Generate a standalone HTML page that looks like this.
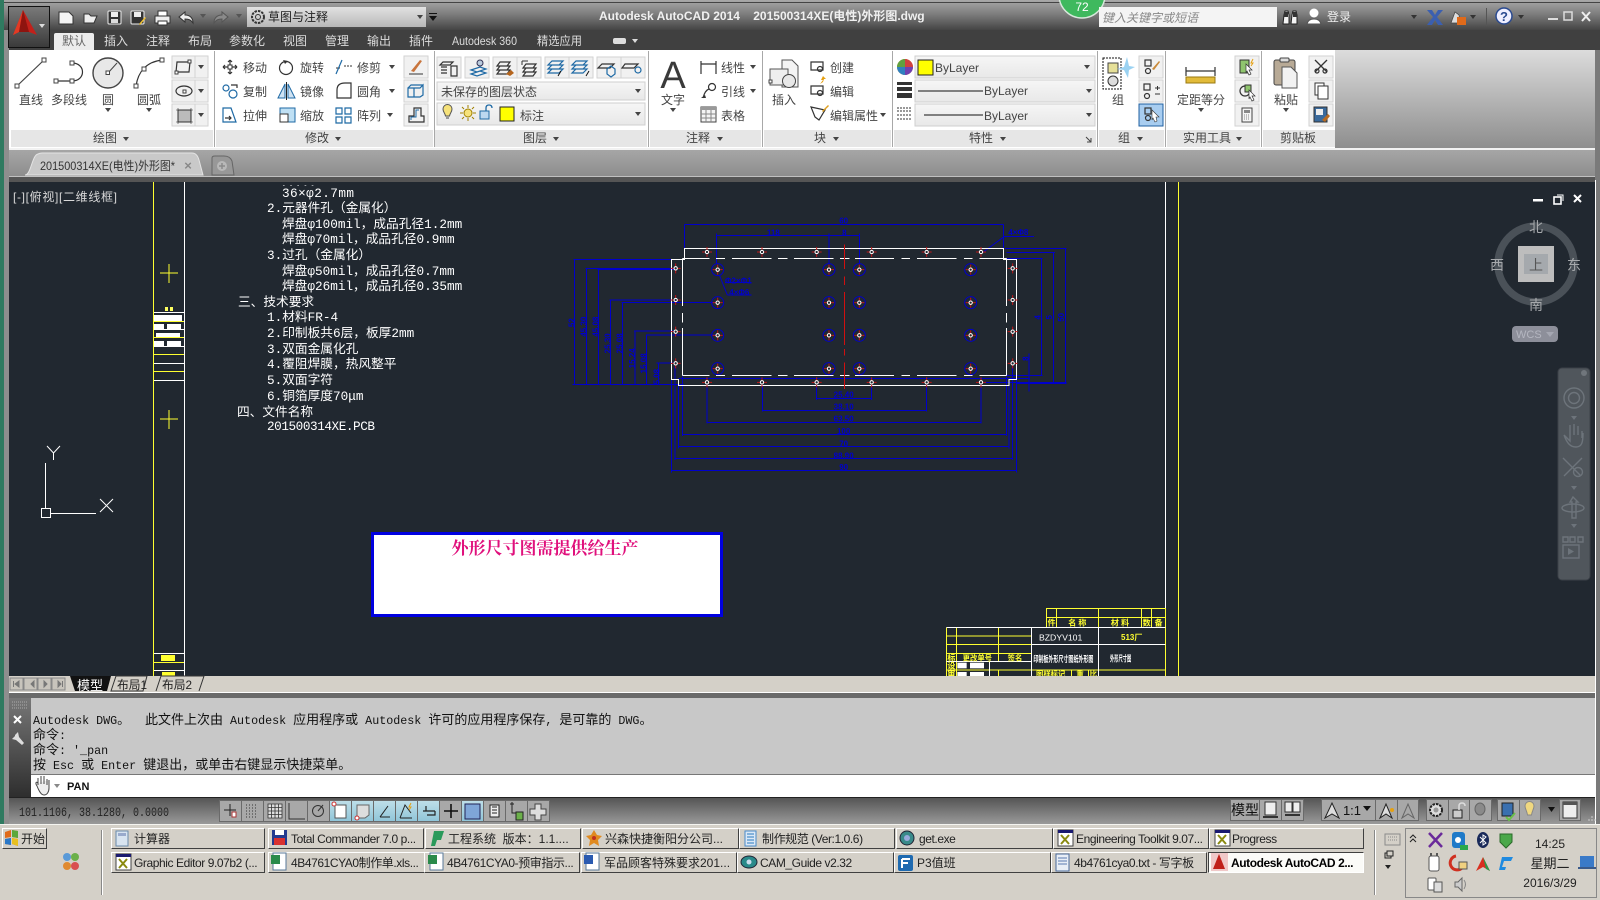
<!DOCTYPE html>
<html lang="zh"><head><meta charset="utf-8"><title>Autodesk AutoCAD 2014</title>
<style>
html,body{margin:0;padding:0;width:1600px;height:900px;overflow:hidden;background:#d4d0c8}
svg{position:absolute;left:0;top:0}
text{font-family:"Liberation Sans","WenQuanYi Zen Hei","Noto Sans CJK SC",sans-serif;font-size:12px;fill:#444}
.m{text-anchor:middle}
.tab{fill:#ddd;font-size:12px}
.d{font-family:"Liberation Mono","WenQuanYi Zen Hei",monospace;font-size:12.7px;fill:#fff}
.c{font-family:"Liberation Mono","WenQuanYi Zen Hei",monospace;font-size:11.7px;fill:#111}
.c tspan{font-size:13px}
.bt{fill:#f1f1f1;stroke:#d2d2d2}
.cb{fill:url(#gc);stroke:#cfcfcf}
.i{fill:none;stroke:#333;stroke-width:1.2}
.ib{fill:none;stroke:#1f6aa5;stroke-width:1.2}
.g{fill:#fff;stroke:#444;stroke-width:1}
.ar{fill:#444}
.dim{stroke:#0000cc;stroke-width:3;fill:none;shape-rendering:crispEdges}
.dt{font-family:"Liberation Sans",sans-serif;font-size:24px;fill:#0000cc;font-weight:bold;text-anchor:middle}
.st{fill:#a8a8a8;stroke:#6a6a6a}
.sa{fill:url(#gb);stroke:#6a6a6a}
.nv{fill:none;stroke:#6d747b;stroke-width:1.4}
.b{position:absolute;height:19px;box-sizing:content-box;border:1px solid;border-color:#fff #404040 #404040 #fff;background:#d4d0c8;font:12px/21px "Liberation Sans","WenQuanYi Zen Hei",sans-serif;color:#222;padding-left:22px;white-space:nowrap;overflow:hidden}
.n{letter-spacing:-.42px}
</style></head><body>
<svg width="1600" height="900" viewBox="0 0 1600 900">
<defs>
<linearGradient id="gt" x1="0" y1="0" x2="0" y2="1"><stop offset="0" stop-color="#a8a8a8"/><stop offset=".5" stop-color="#7a7a7a"/><stop offset="1" stop-color="#444"/></linearGradient>
<linearGradient id="gw" x1="0" y1="0" x2="0" y2="1"><stop offset="0" stop-color="#e2e2e2"/><stop offset="1" stop-color="#b8b8b8"/></linearGradient>
<linearGradient id="gc" x1="0" y1="0" x2="0" y2="1"><stop offset="0" stop-color="#f6f6f6"/><stop offset="1" stop-color="#e8e8e8"/></linearGradient>
<linearGradient id="gr" x1="0" y1="0" x2="0" y2="1"><stop offset="0" stop-color="#dcdcdc"/><stop offset="1" stop-color="#8e8e8e"/></linearGradient>
<linearGradient id="gs" x1="0" y1="0" x2="0" y2="1"><stop offset="0" stop-color="#555"/><stop offset="1" stop-color="#9a9a9a"/></linearGradient>
<linearGradient id="gb" x1="0" y1="0" x2="0" y2="1"><stop offset="0" stop-color="#bfdfe9"/><stop offset="1" stop-color="#8fc5d8"/></linearGradient>
<linearGradient id="gl" x1="0" y1="0" x2="0" y2="1"><stop offset="0" stop-color="#777"/><stop offset="1" stop-color="#2e2e2e"/></linearGradient>
<linearGradient id="gtab" x1="0" y1="0" x2="0" y2="1"><stop offset="0" stop-color="#a6a6a6"/><stop offset="1" stop-color="#8c8c8c"/></linearGradient>
<linearGradient id="glg" x1="0" y1="0" x2="0" y2="1"><stop offset="0" stop-color="#7a7a7a"/><stop offset="1" stop-color="#3a3a3a"/></linearGradient>
<g id="h"><path d="M-15 0H15M0-15V15" stroke="#c01818" stroke-width="3"/><circle r="5" fill="#212830" stroke="#fff" stroke-width="3"/></g>
<g id="H"><circle r="18" fill="none" stroke="#0000cc" stroke-width="3"/><use href="#h"/></g>
<path id="dn" d="M-3-2H3L0 2z"/>
</defs>

<!-- base -->
<rect width="1600" height="900" fill="#808080"/>
<rect x="0" y="0" width="4" height="824" fill="#2f7a60"/>
<rect x="4" y="0" width="5" height="824" fill="#8e8e8e"/>
<rect x="1595" y="0" width="5" height="824" fill="#7a7a7a"/>
<rect x="1595" y="180" width="1" height="644" fill="#fff"/>

<!-- title bar -->
<rect x="4" y="0" width="1596" height="30" fill="url(#gt)"/>
<rect x="4" y="2" width="1596" height="1" fill="#444"/>
<!-- tabs row -->
<rect x="9" y="30" width="1591" height="20" fill="#404040"/>
<path d="M54 50V35q0-2 2-2H92q2 0 2 2V50z" fill="#ececec"/>
<text x="74" y="45" class="m" style="fill:#666">默认</text>
<text x="116" y="45" class="m tab">插入</text><text x="158" y="45" class="m tab">注释</text><text x="200" y="45" class="m tab">布局</text><text x="247" y="45" class="m tab">参数化</text><text x="295" y="45" class="m tab">视图</text><text x="337" y="45" class="m tab">管理</text><text x="379" y="45" class="m tab">输出</text><text x="421" y="45" class="m tab">插件</text><text x="452" y="45" class="tab" textLength="65" lengthAdjust="spacingAndGlyphs">Autodesk 360</text><text x="537" y="45" class="tab" textLength="45" lengthAdjust="spacingAndGlyphs">精选应用</text>
<rect x="613" y="38" width="13" height="6" rx="2" fill="#ddd"/><use href="#dn" x="635" y="41" fill="#ddd"/>
<!-- logo -->
<rect x="8.500" y="6.500" width="41" height="41" fill="url(#glg)" stroke="#111"/>
<path d="M23 10L13 35L19 32H29L37 35z" fill="#c2201a"/>
<path d="M23 10L19 32L13 35z" fill="#e23a24"/><path d="M23 10L29 32H19z" fill="#8e140f"/>
<use href="#dn" x="42" y="26" fill="#ddd"/>
<!-- QAT -->
<path d="M59 12h10l4 4v8H59z" fill="#f4f4f4" stroke="#333"/>
<path d="M84 22V14h5l2 2h6l-3 7H84z" fill="#eee" stroke="#333"/>
<rect x="108" y="11" width="13" height="13" rx="1" fill="#333" stroke="#eee"/><rect x="111" y="12" width="7" height="5" fill="#eee"/><rect x="111" y="19" width="7" height="4" fill="#ddd"/>
<rect x="131" y="11" width="13" height="13" rx="1" fill="#333" stroke="#eee"/><rect x="134" y="12" width="7" height="5" fill="#eee"/><path d="M139 24l6-7 1 1-6 7z" fill="#f2c230"/>
<rect x="155" y="16" width="15" height="7" fill="#eee" stroke="#333"/><rect x="158" y="11" width="9" height="5" fill="#fff" stroke="#333"/><rect x="158" y="21" width="9" height="4" fill="#fff" stroke="#333"/>
<path d="M179 17l6-5v3c5 0 8 3 8 8-2-3-4-4-8-4v3z" fill="#eee" stroke="#333"/>
<use href="#dn" x="203" y="16" fill="#555"/>
<path d="M228 17l-6-5v3c-5 0-8 3-8 8 2-3 4-4 8-4v3z" fill="#8a8a8a" stroke="#555"/>
<use href="#dn" x="239" y="16" fill="#555"/>
<rect x="247" y="7" width="179" height="20" fill="url(#gw)"/>
<circle cx="258" cy="17" r="6" fill="none" stroke="#333" stroke-width="2" stroke-dasharray="2.5 1"/><circle cx="258" cy="17" r="2.5" fill="none" stroke="#333"/>
<text x="268" y="21" style="fill:#222">草图与注释</text>
<use href="#dn" x="420" y="17" fill="#444" /><path d="M429 13h8v1h-8zM429 16h8l-4 5z" fill="#111"/>
<text x="599" y="20" style="fill:#f0f0f0;font-weight:bold" xml:space="preserve">Autodesk AutoCAD 2014    201500314XE(电性)外形图.dwg</text>
<circle cx="1082" cy="-5" r="23" fill="#3fb95e" stroke="#d8e8dc" stroke-width="1.5"/>
<text x="1082" y="11" class="m" style="fill:#fff;font-size:12px">72</text>
<rect x="1099" y="7" width="178" height="20" fill="#f4f4f4"/>
<text x="1102" y="22" style="fill:#888;font-style:italic">键入关键字或短语</text>
<path d="M1284 15l1-4h3l1 4v9h-6zM1292 15l1-4h3l1 4v9h-6z" fill="#f4f4f4" stroke="#222"/><rect x="1284" y="12" width="4" height="5" fill="#333"/><rect x="1293" y="12" width="4" height="5" fill="#333"/>
<circle cx="1314" cy="13" r="4.5" fill="#fff"/><path d="M1307 24c1-4 4-5 7-5s6 1 7 5z" fill="#fff" stroke="#555"/>
<text x="1327" y="21" style="fill:#eee">登录</text>
<use href="#dn" x="1414" y="17" fill="#333"/>
<path d="M1427 10h5l3 5 3-5h5l-6 7 6 8h-5l-3-5-3 5h-5l6-8z" fill="#3b5fb0"/>
<path d="M1451 23l4-11 4 3 1 8z" fill="#ddd" stroke="#444" stroke-width=".7"/><rect x="1457" y="17" width="9" height="8" fill="#e06a1a"/>
<use href="#dn" x="1473" y="17" fill="#333"/>
<rect x="1486" y="8" width="1" height="18" fill="#555"/>
<circle cx="1504" cy="16" r="8" fill="#eef" stroke="#2a4a90" stroke-width="1.5"/><text x="1504" y="21" class="m" style="fill:#2a4a90;font-weight:bold;font-size:13px">?</text>
<use href="#dn" x="1521" y="17" fill="#333"/>
<rect x="1548" y="18" width="10" height="2" fill="#ddd"/><rect x="1564" y="12" width="8" height="8" fill="none" stroke="#ddd" stroke-width="1.5"/>
<path d="M1582 12l8 9M1590 12l-8 9" stroke="#eee" stroke-width="2"/>

<!-- ribbon -->
<rect x="9" y="50" width="1326" height="98" fill="#fff"/>
<rect x="1335" y="50" width="260" height="98" fill="url(#gr)"/>
<rect x="9" y="148" width="1586" height="2" fill="#f2f2f2"/>
<g fill="#e6e6e6">
<rect x="11" y="130" width="202" height="17"/><rect x="216" y="130" width="217" height="17"/><rect x="435" y="130" width="212" height="17"/><rect x="650" y="130" width="111" height="17"/><rect x="764" y="130" width="127" height="17"/><rect x="894" y="130" width="202" height="17"/><rect x="1099" y="130" width="65" height="17"/><rect x="1167" y="130" width="93" height="17"/><rect x="1263" y="130" width="72" height="17"/>
</g>
<g fill="#a8a8a8">
<rect x="214" y="51" width="1" height="96"/><rect x="434" y="51" width="1" height="96"/><rect x="648" y="51" width="1" height="96"/><rect x="762" y="51" width="1" height="96"/><rect x="892" y="51" width="1" height="96"/><rect x="1097" y="51" width="1" height="96"/><rect x="1165" y="51" width="1" height="96"/><rect x="1261" y="51" width="1" height="96"/>
</g>
<!-- footers -->
<text x="105" y="142" class="m">绘图</text><use href="#dn" x="126" y="139" class="ar"/>
<text x="317" y="142" class="m">修改</text><use href="#dn" x="338" y="139" class="ar"/>
<text x="535" y="142" class="m">图层</text><use href="#dn" x="556" y="139" class="ar"/>
<text x="698" y="142" class="m">注释</text><use href="#dn" x="720" y="139" class="ar"/>
<text x="820" y="142" class="m">块</text><use href="#dn" x="836" y="139" class="ar"/>
<text x="981" y="142" class="m">特性</text><use href="#dn" x="1003" y="139" class="ar"/>
<path d="M1086 137l5 5M1091 138v4h-4" stroke="#444" fill="none"/>
<text x="1124" y="142" class="m">组</text><use href="#dn" x="1140" y="139" class="ar"/>
<text x="1207" y="142" class="m">实用工具</text><use href="#dn" x="1239" y="139" class="ar"/>
<text x="1298" y="142" class="m">剪贴板</text>

<!-- draw panel -->
<path d="M17 86L44 60" stroke="#444" stroke-width="1.2"/><rect x="15" y="84" width="4" height="4" class="g"/><rect x="42" y="58" width="4" height="4" class="g"/>
<path d="M56 81H72C86 81 86 63 72 63" class="i"/><rect x="54" y="79" width="4" height="4" class="g"/><rect x="70" y="79" width="4" height="4" class="g"/><rect x="70" y="61" width="4" height="4" class="g"/>
<circle cx="108" cy="73" r="15" fill="#e8e8e8" stroke="#444" stroke-width="1.4"/><path d="M108 73L117 63" stroke="#444"/><rect x="106" y="71" width="3.5" height="3.5" class="g"/>
<path d="M136 86C138 72 146 62 162 60" class="i"/><rect x="134" y="84" width="4" height="4" class="g"/><rect x="142" y="67" width="4" height="4" class="g"/><rect x="160" y="58" width="4" height="4" class="g"/>
<text x="31" y="104" class="m">直线</text><text x="69" y="104" class="m">多段线</text><text x="108" y="104" class="m">圆</text><text x="149" y="104" class="m">圆弧</text>
<use href="#dn" x="108" y="110" class="ar"/><use href="#dn" x="149" y="110" class="ar"/>
<rect x="172" y="56" width="36" height="22" class="bt"/><rect x="172" y="80" width="36" height="22" class="bt"/><rect x="172" y="104" width="36" height="22" class="bt"/>
<path d="M195 56v22M195 80v22M195 104v22" stroke="#d2d2d2"/>
<use href="#dn" x="201" y="67" class="ar"/><use href="#dn" x="201" y="91" class="ar"/><use href="#dn" x="201" y="115" class="ar"/>
<path d="M177 62h13l-1 10h-13z" class="i"/><rect x="188" y="60" width="3" height="3" class="g"/><rect x="175" y="71" width="3" height="3" class="g"/>
<ellipse cx="184" cy="91" rx="8" ry="5" class="i"/><rect x="183" y="90" width="3" height="3" class="g"/>
<rect x="178" y="110" width="13" height="12" fill="#bbb" stroke="#333"/><path d="M176 110h17M176 122h17M178 108v16M191 108v16" stroke="#333" stroke-width=".6"/>

<!-- modify -->
<path d="M230 60v14M223 67h14M230 60l-2 2M230 60l2 2M230 74l-2-2M230 74l2-2M223 67l2-2M223 67l2 2M237 67l-2-2M237 67l-2 2" class="i"/><rect x="228" y="65" width="4" height="4" fill="#fff" stroke="#333"/>
<circle cx="286" cy="68" r="6.5" class="i"/><path d="M283 60l5 1-3 3z" fill="#333"/>
<path d="M336 74l6-14" stroke="#1f6aa5" stroke-width="1.2"/><path d="M336 68h4M344 66h8" stroke="#333" stroke-dasharray="2 1"/>
<circle cx="226" cy="88" r="3" fill="#cfe0ee" class="ib"/><circle cx="233" cy="94" r="4" class="ib" fill="#9dc7e6"/><path d="M231 85h6v3" class="i"/>
<path d="M285 84l-7 14h7zM288 84l7 14h-7z" fill="#cfe2f2" stroke="#1f6aa5"/><path d="M286.500 82v18" stroke="#222"/>
<path d="M337 98V90q0-7 8-7h6v15z" class="i"/>
<path d="M223 108h8l5 14h-13z" fill="#e8f2fa" class="ib"/><path d="M225 118h6M229 116l2 2-2 2" class="i"/>
<rect x="280" y="108" width="15" height="14" fill="#bfe0f4" stroke="#1f6aa5"/><rect x="280" y="114" width="8" height="8" fill="#fff" stroke="#333"/>
<path d="M336 108h6v6h-6zM345 108h6v6h-6zM336 117h6v6h-6zM345 117h6v6h-6z" class="ib"/>
<text x="243" y="72">移动</text><text x="300" y="72">旋转</text><text x="357" y="72">修剪</text><text x="243" y="96">复制</text><text x="300" y="96">镜像</text><text x="357" y="96">圆角</text><text x="243" y="120">拉伸</text><text x="300" y="120">缩放</text><text x="357" y="120">阵列</text>
<use href="#dn" x="392" y="67" class="ar"/><use href="#dn" x="392" y="91" class="ar"/><use href="#dn" x="390" y="115" class="ar"/>
<rect x="404" y="56" width="24" height="22" class="bt"/><rect x="404" y="80" width="24" height="22" class="bt"/><rect x="404" y="104" width="24" height="22" class="bt"/>
<path d="M411 71l9-11 2 1-8 11z" fill="#c8743c"/><path d="M409 74h14" stroke="#333"/>
<path d="M408 88h12l3-3v10l-3 2H408zM408 88l3-3h12M414 88v9" class="ib"/>
<path d="M409 122v-6h5v-8h7v8h3v6z" class="i"/><path d="M411 120v-3h5v-7h3" stroke="#1f6aa5" fill="none"/>

<!-- layers -->
<rect x="437" y="57" width="24" height="21" class="bt"/><rect x="465" y="57" width="24" height="21" class="bt"/>
<rect x="493" y="57" width="48" height="21" class="bt"/><rect x="545" y="57" width="48" height="21" class="bt"/><rect x="597" y="57" width="48" height="21" class="bt"/>
<path d="M517 57v21M569 57v21M621 57v21" stroke="#d2d2d2"/>
<path d="M443 62h10l-3 3h-10zM441 67h6M441 70h6M441 73h6M451 66h6v10h-6z" class="i"/>
<path d="M471 70l9-3 6 2-9 3zM471 74l9-3 6 2-9 3z" fill="#cfe2f2" class="ib"/><circle cx="480" cy="63" r="3" fill="#bcd" stroke="#335"/>
<g class="i"><path d="M500 62h10l-3 4h-10zM500 66h10l-3 4h-10zM500 70h10l-3 4h-10z"/><path d="M526 64h10l-3 4h-10zM526 68h10l-3 4h-10zM526 72h10l-3 4h-10z"/></g><path d="M506 74l5-4 3 3-4 3z" fill="#b5651d"/><path d="M522 61h6M522 61v4" stroke="#333" fill="none"/>
<g class="ib"><path d="M552 61h11l-4 4h-11zM552 65h11l-4 4h-11zM552 69h11l-4 4h-11z"/><path d="M576 61h11l-4 4h-11zM576 65h11l-4 4h-11zM576 69h11l-4 4h-11z"/></g>
<path d="M561 71l-3 5M589 71l-3 5" stroke="#111"/>
<path d="M602 64h12l-4 4h-12z" class="i"/><path d="M611 66l4 3v5l-4 3-4-3v-5z" fill="#bde" class="ib"/>
<path d="M625 64h13l-4 4h-12z" class="i"/><circle cx="638" cy="70" r="3" fill="#cfe6fa" class="ib"/>
<rect x="437" y="82" width="208" height="18" class="cb"/><text x="441" y="96">未保存的图层状态</text><use href="#dn" x="638" y="91" class="ar"/>
<rect x="437" y="103" width="208" height="22" class="cb"/>
<path d="M443 109a4.500 4.500 0 0 1 9 0c0 3-2 4-2.500 7h-4c-.5-3-2.500-4-2.500-7z" fill="#f6e27a" stroke="#555"/><rect x="446" y="116" width="3" height="3" fill="#999"/>
<circle cx="468" cy="113" r="4" fill="#f6e27a" stroke="#a08000"/><path d="M468 105v3M468 118v3M460 113h3M473 113h3M462 107l2 2M472 117l2 2M474 107l-2 2M464 117l-2 2" stroke="#a08000"/>
<rect x="480" y="111" width="9" height="8" fill="#bcd8f0" stroke="#1f6aa5"/><path d="M486 111v-3q0-3 3-3t3 3" fill="none" stroke="#1f6aa5" stroke-width="1.300"/>
<rect x="500" y="107" width="14" height="14" fill="#ff0" stroke="#222"/>
<text x="520" y="120">标注</text><use href="#dn" x="638" y="114" class="ar"/>

<!-- annotation -->
<text x="673" y="88" class="m" style="font-size:38px;fill:#3a3a3a">A</text>
<text x="673" y="104" class="m">文字</text><use href="#dn" x="673" y="110" class="ar"/>
<path d="M701 61v13M716 61v13M701 64h15" class="i"/>
<circle cx="712" cy="87" r="3.5" class="i"/><path d="M709 89c-3 1-5 5-6 9" class="i"/><path d="M701 98l4-3 1 3z" fill="#333"/>
<rect x="701" y="107" width="15" height="15" fill="#f4f4f4" stroke="#444"/><rect x="701" y="107" width="15" height="3" fill="#999"/><path d="M706 110v12M711 110v12M701 114h15M701 118h15" stroke="#888"/>
<text x="721" y="72">线性</text><text x="721" y="96">引线</text><text x="721" y="120">表格</text>
<use href="#dn" x="753" y="67" class="ar"/><use href="#dn" x="753" y="91" class="ar"/>

<!-- block -->
<path d="M782 60h10l6 6v21h-16z" fill="#f4f4f4" stroke="#555"/><path d="M770 69h18v16H770z" fill="#efefef" stroke="#555"/><circle cx="789" cy="81" r="6.500" fill="#e8e8e8" stroke="#444"/><rect x="769" y="80" width="3" height="3" class="g"/>
<text x="784" y="104" class="m">插入</text>
<g class="i"><path d="M811 62h12v8h-12z"/><circle cx="820" cy="69" r="2.500"/><path d="M811 86h12v8h-12z"/><circle cx="820" cy="93" r="2.500"/><path d="M811 107l14 3-6 10-4-3z"/></g>
<path d="M820 84l3-4h-2l2-4 3 3h-2l-1 3z" fill="#e6a010"/><path d="M822 111l6-6 1 1-6 6z" fill="#e0a020"/>
<text x="830" y="72">创建</text><text x="830" y="96">编辑</text><text x="830" y="120">编辑属性</text><use href="#dn" x="883" y="115" class="ar"/>

<!-- properties -->
<circle cx="905" cy="67" r="8" fill="#e0a030"/><path d="M905 67L905 59A8 8 0 0 1 913 67z" fill="#d04040"/><path d="M905 67L913 67A8 8 0 0 1 905 75z" fill="#7040b0"/><path d="M905 67L905 75A8 8 0 0 1 897 67z" fill="#3080c0"/><path d="M905 67L897 67A8 8 0 0 1 905 59z" fill="#60a040"/>
<rect x="897" y="82" width="15" height="3" fill="#333"/><rect x="897" y="87" width="15" height="4" fill="#333"/><rect x="897" y="93" width="15" height="5" fill="#333"/>
<path d="M897 108h15M897 111h15M897 115h15M897 119h15" stroke="#333" stroke-dasharray="2 1"/>
<rect x="915" y="56" width="180" height="22" class="cb"/><rect x="915" y="80" width="180" height="22" class="cb"/><rect x="915" y="104" width="180" height="22" class="cb"/>
<rect x="918" y="60" width="15" height="15" fill="#ff0" stroke="#222"/>
<text x="935" y="72">ByLayer</text>
<path d="M918 91h65M924 115h59" stroke="#111"/>
<text x="984" y="95">ByLayer</text><text x="984" y="120">ByLayer</text>
<use href="#dn" x="1087" y="67" class="ar"/><use href="#dn" x="1089" y="91" class="ar"/><use href="#dn" x="1089" y="115" class="ar"/>

<!-- group -->
<rect x="1103" y="58" width="18" height="31" fill="none" stroke="#111" stroke-dasharray="2 1"/>
<rect x="1108" y="63" width="10" height="10" fill="#e6e098" stroke="#444"/><circle cx="1113" cy="81" r="5" fill="#ddd" stroke="#333"/>
<path d="M1127 57l-3 10-7 2 7 1 4 8 1-8 6-3-6-1z" fill="#9ad2f2"/>
<text x="1118" y="104" class="m">组</text>
<rect x="1139" y="56" width="24" height="22" class="bt"/><rect x="1139" y="80" width="24" height="22" class="bt"/><rect x="1139" y="104" width="24" height="22" fill="#a8cdf0" stroke="#2060a0"/>
<g class="i"><rect x="1145" y="60" width="6" height="6"/><circle cx="1148" cy="71" r="2.500"/><rect x="1144" y="84" width="6" height="6"/><circle cx="1147" cy="96" r="2.500"/><rect x="1145" y="108" width="6" height="6"/><circle cx="1148" cy="118" r="2.500"/></g>
<path d="M1152 69l7-8 1 1-6 8z" fill="#c98a3a"/><path d="M1155 88h5M1157.500 86v4M1155 94h5" stroke="#333"/><path d="M1152 110l7 7h-3l1 4-2 1-2-4-1 2z" fill="#fff" stroke="#333" stroke-width=".6"/>

<!-- utilities -->
<path d="M1186 67v9M1215 67v9M1186 71h29" class="i"/><rect x="1186" y="77" width="29" height="6" fill="#e2bb3a" stroke="#9a7a10"/>
<text x="1201" y="104" class="m">定距等分</text><use href="#dn" x="1201" y="110" class="ar"/>
<rect x="1235" y="56" width="24" height="22" class="bt"/><rect x="1235" y="80" width="24" height="22" class="bt"/><rect x="1235" y="104" width="24" height="22" class="bt"/>
<rect x="1240" y="60" width="9" height="13" fill="#8fc56e" stroke="#333"/><path d="M1246 64l6 6h-3l2 4-2 1-2-4-1 2z" fill="#fff" stroke="#333" stroke-width=".7"/><path d="M1253 59l-2 4h2l-2 3" stroke="#e6a010" fill="none"/>
<circle cx="1245" cy="91" r="5" class="i"/><rect x="1245" y="85" width="6" height="7" fill="#8fc56e" stroke="#333"/><path d="M1249 90l6 6h-3l2 4-2 1-2-4-1 2z" fill="#fff" stroke="#333" stroke-width=".7"/>
<rect x="1242" y="108" width="10" height="14" fill="#f4f4f4" stroke="#444"/><rect x="1244" y="110" width="6" height="3" fill="#888"/><path d="M1244 115h6M1244 117h6M1244 119h6" stroke="#888" stroke-dasharray="1 1"/>

<!-- clipboard -->
<rect x="1274" y="60" width="21" height="25" rx="2" fill="#b8aa96" stroke="#444"/><rect x="1280" y="58" width="9" height="4" rx="1" fill="#ddd" stroke="#444"/><path d="M1282 67h9l6 6v15h-15z" fill="#f2f2f2" stroke="#555"/>
<text x="1286" y="104" class="m">粘贴</text><use href="#dn" x="1286" y="110" class="ar"/>
<rect x="1309" y="56" width="24" height="22" class="bt"/><rect x="1309" y="80" width="24" height="22" class="bt"/><rect x="1309" y="104" width="24" height="22" class="bt"/>
<path d="M1315 60l12 12M1327 60l-12 12" stroke="#333" stroke-width="1.300"/><circle cx="1317" cy="71" r="2" class="i"/><circle cx="1325" cy="71" r="2" class="i"/>
<rect x="1315" y="83" width="9" height="12" fill="#fff" stroke="#333"/><rect x="1318" y="86" width="10" height="13" fill="#fff" stroke="#333"/>
<rect x="1314" y="107" width="13" height="15" fill="#3a6a9c" stroke="#333"/><rect x="1316" y="109" width="7" height="6" fill="#eee"/><path d="M1322 120l6-6 2 2-5 6z" fill="#b86a20"/>

<!-- doc tab bar -->
<rect x="9" y="150" width="1586" height="27" fill="url(#gtab)"/>
<rect x="9" y="176" width="1586" height="1" fill="#c0c0c0"/>
<rect x="9" y="177" width="1586" height="5" fill="#555"/>
<path d="M25 175c6 0 7-20 13-21q2-1 4-1H192q5 0 7 7l4 15z" fill="#c9c9c9" stroke="#e4e4e4"/>
<text x="40" y="170" style="fill:#333" textLength="135" lengthAdjust="spacingAndGlyphs">201500314XE(电性)外形图*</text>
<text x="188" y="170" class="m" style="fill:#888;font-weight:bold;font-size:13px">×</text>
<path d="M212 175v-17q0-2 3-2h9q6 0 8 5l2 14z" fill="#989898" stroke="#666"/><circle cx="222" cy="166" r="5" fill="#b8b8b8"/><path d="M219 166h6M222 163v6" stroke="#8a8a8a" stroke-width="1.500"/>

<!-- canvas -->
<rect x="9" y="182" width="1586" height="494" fill="#212830"/>
<path d="M153.500 182V676" stroke="#ffff30"/><path d="M184.500 182V676" stroke="#fff"/>
<path d="M160 273h18M169 264v19M160 419h18M169 410v19" stroke="#ffff30"/>
<g fill="#ffff60"><rect x="165" y="307" width="3" height="4"/><rect x="170" y="307" width="3" height="4"/></g>
<path d="M154 312.500h30M154 329.500h30M154 346.500h30M154 363.500h30M154 380.500h30" stroke="#fff"/>
<path d="M154 321.500h30M154 337.500h30M154 354.500h30M154 371.500h30" stroke="#ffff30"/>
<g fill="#fff"><rect x="154" y="315" width="28" height="6"/><rect x="154" y="324" width="10" height="5"/><rect x="167" y="324" width="14" height="5"/><rect x="156" y="333" width="24" height="4"/><rect x="154" y="341" width="10" height="5"/><rect x="167" y="341" width="14" height="5"/></g>
<path d="M154 653.500h30M154 670.500h30" stroke="#fff"/><path d="M154 662.500h30" stroke="#ffff30"/>
<rect x="161" y="655" width="14" height="6" fill="#ffff30"/><rect x="162" y="672" width="13" height="5" fill="#ffff30"/>

<text x="13" y="201" style="fill:#d8d8d8;font-size:12px" textLength="104" lengthAdjust="spacing">[-][俯视][二维线框]</text>
<text x="282" y="197" class="d" textLength="72" lengthAdjust="spacing">36×φ2.7mm</text>
<text x="282" y="187" class="d" style="font-size:6px">- - - - -</text>
<text x="267" y="212" class="d">2.元器件孔（金属化）</text>
<text x="282" y="228" class="d">焊盘φ100mil，成品孔径1.2mm</text>
<text x="282" y="243" class="d">焊盘φ70mil，成品孔径0.9mm</text>
<text x="267" y="259" class="d">3.过孔（金属化）</text>
<text x="282" y="275" class="d">焊盘φ50mil，成品孔径0.7mm</text>
<text x="282" y="290" class="d">焊盘φ26mil，成品孔径0.35mm</text>
<text x="238" y="306" class="d">三、技术要求</text>
<text x="267" y="321" class="d">1.材料FR-4</text>
<text x="267" y="337" class="d">2.印制板共6层，板厚2mm</text>
<text x="267" y="353" class="d">3.双面金属化孔</text>
<text x="267" y="368" class="d">4.覆阻焊膜，热风整平</text>
<text x="267" y="384" class="d">5.双面字符</text>
<text x="267" y="400" class="d">6.铜箔厚度70μm</text>
<text x="237" y="416" class="d">四、文件名称</text>
<text x="267" y="430" class="d" textLength="108" lengthAdjust="spacing">201500314XE.PCB</text>

<!-- UCS -->
<path d="M45.500 463V508M51 513.500H96" stroke="#fff"/><rect x="41.500" y="508.500" width="9" height="9" fill="none" stroke="#fff"/>
<path d="M100 499l13 13M113 499l-13 13M47 446l6.500 7 6.500-7M53.500 453v7" stroke="#fff" fill="none"/>

<!-- PCB outline drawing -->
<g transform="translate(560 200) scale(.33333)">
<g class="dim">
<path d="M373 73H1330M373 73V145M1330 73V145M470 107H898M470 100V190M807 100V190M898 100V190"/>
<path d="M1332 110H1422"/>
<path d="M1335 145H1520M1340 157H1485M1340 176H1447M1340 526H1447M1370 550H1520M1260 548H1520M356 536H1410M1516 145V552M1480 157V550M1444 176V526M1407 460V575"/>
<path d="M40 178H334M77 206H347M113 208H347M148 300H347M185 307H473M222 393H347M258 405H473M290 489H347M43 178V553M80 206V553M116 206V553M152 300V553M188 307V553M225 393V553M260 405V553M295 489V553M38 553H370"/>
<path d="M502 285H575M495 248H575"/>
<path d="M770 595H935M770 555V600M935 555V600M607 631H1100M607 556V635M1100 556V635M441 667H1263M441 556V670M1263 556V670M368 704H1340M368 530V708M1340 530V708M356 740H1347M356 556V745M1347 556V745M345 776H1358M345 500V780M1358 500V780M334 812H1369M334 540V818M1369 540V818"/>
</g>
<path d="M1270 156L1332 110M478 225L502 285" stroke="#0000cc" stroke-width="3" fill="none"/>
<path d="M373 145H1330V178H1369V539H1347V556H356V539H334V178H373z" fill="none" stroke="#fff" stroke-width="3" shape-rendering="crispEdges"/>
<path d="M367 175H448M468 175H495M516 175H634M654 175H682M702 175H820M840 175H868M885 175H1002M1024 175H1050M1071 175H1190M1212 175H1238M1258 175H1340M367 526H448M468 526H495M516 526H634M654 526H682M702 526H820M840 526H868M885 526H1002M1024 526H1050M1071 526H1190M1212 526H1238M1258 526H1340M367 175V318M367 339V367M367 384V526M1340 175V318M1340 339V367M1340 384V526" stroke="#fff" stroke-width="3" fill="none" shape-rendering="crispEdges"/>
<path d="M853 133V207M853 229V255M853 276V435M853 447V467M853 488V567" stroke="#d01010" stroke-width="3" shape-rendering="crispEdges"/>
<text x="851" y="70" class="dt">60</text><text x="640" y="106" class="dt">118</text><text x="853" y="106" class="dt">8</text>
<text x="1375" y="105" class="dt">4×Φ8</text><text x="535" y="250" class="dt">Φ2×Φ1</text><text x="538" y="285" class="dt">4×Φ6</text>
<text x="851" y="593" class="dt">25.40</text><text x="851" y="629" class="dt">38.10</text><text x="851" y="665" class="dt">63.50</text><text x="851" y="702" class="dt">100</text><text x="851" y="740" class="dt">70</text><text x="851" y="775" class="dt">88.90</text><text x="851" y="810" class="dt">90</text>
<text transform="translate(44 368) rotate(-90)" class="dt">52</text><text transform="translate(80 380) rotate(-90)" class="dt">45.30</text><text transform="translate(116 380) rotate(-90)" class="dt">45.08</text><text transform="translate(152 430) rotate(-90)" class="dt">25.30</text><text transform="translate(188 430) rotate(-90)" class="dt">25.08</text><text transform="translate(225 475) rotate(-90)" class="dt">15.24</text><text transform="translate(260 490) rotate(-90)" class="dt">15.08</text><text transform="translate(298 530) rotate(-90)" class="dt">5.08</text>
<text transform="translate(1441 352) rotate(-90)" class="dt">4</text><text transform="translate(1476 352) rotate(-90)" class="dt">5</text><text transform="translate(1512 352) rotate(-90)" class="dt">50</text><text transform="translate(1405 476) rotate(-90)" class="dt">8</text>
<use href="#h" x="441" y="156"/><use href="#h" x="606" y="156"/><use href="#h" x="770" y="156"/><use href="#h" x="935" y="156"/><use href="#h" x="1100" y="156"/><use href="#h" x="1263" y="156"/>
<use href="#h" x="441" y="547"/><use href="#h" x="606" y="547"/><use href="#h" x="770" y="547"/><use href="#h" x="935" y="547"/><use href="#h" x="1100" y="547"/><use href="#h" x="1263" y="547"/>
<use href="#h" x="347" y="205"/><use href="#h" x="347" y="300"/><use href="#h" x="347" y="395"/><use href="#h" x="347" y="490"/>
<use href="#h" x="1358" y="205"/><use href="#h" x="1358" y="300"/><use href="#h" x="1358" y="395"/><use href="#h" x="1358" y="490"/>
<use href="#H" x="473" y="209"/><use href="#H" x="807" y="209"/><use href="#H" x="898" y="209"/><use href="#H" x="1232" y="209"/>
<use href="#H" x="473" y="308"/><use href="#H" x="807" y="308"/><use href="#H" x="898" y="308"/><use href="#H" x="1232" y="308"/>
<use href="#H" x="473" y="406"/><use href="#H" x="807" y="406"/><use href="#H" x="898" y="406"/><use href="#H" x="1232" y="406"/>
<use href="#H" x="473" y="506"/><use href="#H" x="807" y="506"/><use href="#H" x="898" y="506"/><use href="#H" x="1232" y="506"/>
</g>

<!-- white note box -->
<rect x="372.500" y="533.500" width="349" height="82" fill="#fff" stroke="#0000e0" stroke-width="3"/>
<text x="545" y="554" class="m" style="font-family:'Liberation Serif','Noto Serif CJK SC',serif;font-size:17px;font-weight:bold;fill:#e0107c">外形尺寸图需提供给生产</text>

<!-- title block + border -->
<path d="M1165.500 182V676" stroke="#fff"/><path d="M1178.500 182V676" stroke="#ffff30"/>
<g transform="translate(930 600) scale(.33333)">
<g stroke="#ffff30" stroke-width="3" fill="none" shape-rendering="crispEdges">
<path d="M350 82V25H706V230M350 52H706M380 25V82M505 25V82M635 25V82M665 25V82"/>
<path d="M50 82V230M79 82V230M205 82V185M50 108H304M50 133H304M50 160H304M50 210H706M205 210V230M425 210V230M475 210V230"/>
</g>
<path d="M50 82H706M304 82V230M506 82V230M304 133H706M50 185H304M178 185V230" stroke="#fff" stroke-width="3" fill="none" shape-rendering="crispEdges"/>
<g fill="#fff"><rect x="82" y="188" width="28" height="17"/><rect x="120" y="188" width="42" height="17"/><rect x="82" y="216" width="28" height="14"/><rect x="120" y="216" width="42" height="14"/></g>
<text x="392" y="122" class="m" style="font-family:'Liberation Sans';font-size:26px;fill:#fff">BZDYV101</text>
<text x="605" y="120" class="m" style="font-family:'Liberation Sans','WenQuanYi Zen Hei';font-size:24px;font-weight:bold;fill:#ffff30">513厂</text>
<text x="400" y="186" class="m" textLength="180" lengthAdjust="spacingAndGlyphs" style="font-size:26px;font-weight:bold;fill:#fff">印制板外形尺寸图纸外形图</text>
<text x="572" y="184" class="m" textLength="64" lengthAdjust="spacingAndGlyphs" style="font-size:26px;font-weight:bold;fill:#fff">外形尺寸图</text>
<text x="365" y="76" class="m" style="font-size:24px;font-weight:bold;fill:#ffff30">件</text><text x="442" y="76" class="m" style="font-size:24px;font-weight:bold;fill:#ffff30">名 称</text><text x="570" y="76" class="m" style="font-size:24px;font-weight:bold;fill:#ffff30">材 料</text><text x="650" y="76" class="m" style="font-size:24px;font-weight:bold;fill:#ffff30">数</text><text x="686" y="76" class="m" style="font-size:24px;font-weight:bold;fill:#ffff30">备</text>
<text x="64" y="182" class="m" style="font-size:24px;font-weight:bold;fill:#ffff30">标</text><text x="142" y="182" class="m" style="font-size:22px;font-weight:bold;fill:#ffff30">更改单号</text><text x="255" y="182" class="m" style="font-size:22px;font-weight:bold;fill:#ffff30">签名</text><text x="64" y="206" class="m" style="font-size:24px;font-weight:bold;fill:#ffff30">设</text><text x="64" y="230" class="m" style="font-size:24px;font-weight:bold;fill:#ffff30">审</text>
<text x="362" y="230" class="m" style="font-size:22px;font-weight:bold;fill:#ffff30">图样标记</text><text x="450" y="230" class="m" style="font-size:22px;font-weight:bold;fill:#ffff30">重</text><text x="490" y="230" class="m" style="font-size:22px;font-weight:bold;fill:#ffff30">比</text>
</g>

<!-- viewport controls / cube -->
<rect x="1533" y="199" width="10" height="2.500" fill="#fff"/>
<rect x="1554" y="197" width="7" height="7" fill="none" stroke="#fff" stroke-width="1.600"/><path d="M1557 195h6v6" fill="none" stroke="#fff"/>
<path d="M1574 195l7 7M1581 195l-7 7" stroke="#fff" stroke-width="2"/>
<circle cx="1536" cy="264" r="38" fill="none" stroke="#4a5158" stroke-width="7.500"/>
<rect x="1518" y="246" width="36" height="36" fill="#bdbdbd"/><rect x="1524" y="254" width="24" height="20" fill="#a5a9ad"/>
<text x="1536" y="270" class="m" style="fill:#555;font-size:14px">上</text>
<text x="1536" y="232" class="m" style="fill:#a6a9ac;font-size:14px">北</text><text x="1536" y="310" class="m" style="fill:#a6a9ac;font-size:14px">南</text><text x="1497" y="270" class="m" style="fill:#a6a9ac;font-size:14px">西</text><text x="1574" y="270" class="m" style="fill:#a6a9ac;font-size:14px">东</text>
<rect x="1512" y="326" width="46" height="16" rx="4" fill="#8d8f9a"/><text x="1516" y="338" style="fill:#b4b6c0;font-size:11px">WCS</text><path d="M1546 332h8l-4 5z" fill="#a5a7b2"/>
<rect x="1558" y="368" width="32" height="212" rx="4" fill="#50565c" stroke="#3c4148"/>
<circle cx="1584" cy="373" r="3" fill="#70767c"/>
<circle cx="1574" cy="398" r="10" class="nv"/><circle cx="1574" cy="398" r="5.500" class="nv"/>
<use href="#dn" x="1574" y="418" fill="#6d747b"/>
<path d="M1564 435l6 6v-13M1570 435v-10M1574 435v-11M1578 435v-9M1582 438v-7M1564 435c3 8 6 12 12 12s7-5 7-14" class="nv"/>
<path d="M1563 458l18 18M1582 458l-18 18" class="nv"/><circle cx="1578" cy="472" r="4.500" class="nv"/>
<use href="#dn" x="1574" y="488" fill="#6d747b"/>
<path d="M1573 497l-3 5h2v16h4v-16h2z" class="nv"/><ellipse cx="1573" cy="508" rx="11" ry="4" class="nv"/>
<use href="#dn" x="1574" y="526" fill="#6d747b"/>
<path d="M1563 537h5v5h-5zM1570 537h5v5h-5zM1578 537h5v5h-5z" class="nv"/><rect x="1563" y="545" width="16" height="13" class="nv"/><path d="M1568 548l6 3.500-6 3.500z" fill="#6d747b"/>

<!-- layout tabs -->
<rect x="9" y="676" width="1586" height="16" fill="#d4d0c8"/>
<rect x="9" y="692" width="1586" height="1" fill="#fff"/>
<rect x="9" y="693" width="1586" height="5" fill="#6a6a6a"/>
<g fill="#c8c4bc" stroke="#888"><rect x="10" y="678" width="13" height="12"/><rect x="24" y="678" width="13" height="12"/><rect x="38" y="678" width="13" height="12"/><rect x="52" y="678" width="13" height="12"/></g>
<path d="M15 684l4-3v6zM13.500 681v6M31 684l3-3v6zM44 681l3 3-3 3zM58 681l3 3-3 3zM62.500 681v6" fill="#777" stroke="#777"/>
<path d="M70 676h41l-4 15H75z" fill="#111"/>
<path d="M111 691l5-15h31l-4 15zM156 691l5-15h43l-5 15" fill="none" stroke="#333"/>
<text x="77" y="690" style="fill:#fff;font-size:13px">模型</text>
<text x="117" y="689" style="fill:#222;font-size:12px" textLength="30" lengthAdjust="spacingAndGlyphs">布局1</text>
<text x="162" y="689" style="fill:#222;font-size:12px" textLength="30" lengthAdjust="spacingAndGlyphs">布局2</text>

<!-- command -->
<rect x="9" y="698" width="1586" height="77" fill="#c8c8c8"/>
<rect x="9" y="698" width="22" height="99" fill="url(#gl)"/>
<path d="M12 702h16M12 705h16M12 708h16" stroke="#aaa" stroke-dasharray="1 1"/>
<path d="M14 716l7 7M21 716l-7 7" stroke="#fff" stroke-width="2"/>
<path d="M15 735l3-3 1 5 5 6-2 2-6-5-4-1 3-3z" fill="#ddd"/>
<rect x="31" y="775" width="1564" height="22" fill="#fff"/><rect x="31" y="774" width="1564" height="1" fill="#777"/>
<rect x="9" y="797" width="1586" height="1" fill="#222"/>
<text x="33" y="724" class="c" xml:space="preserve">Autodesk DWG<tspan>。 </tspan> <tspan>此文件上次由</tspan> Autodesk <tspan>应用程序或</tspan> Autodesk <tspan>许可的应用程序保存</tspan>, <tspan>是可靠的</tspan> DWG<tspan>。</tspan></text>
<text x="33" y="739" class="c"><tspan>命令</tspan>:</text>
<text x="33" y="754" class="c"><tspan>命令</tspan>: '_pan</text>
<text x="33" y="769" class="c" xml:space="preserve"><tspan>按</tspan> Esc <tspan>或</tspan> Enter <tspan>键退出，或单击右键显示快捷菜单。</tspan></text>
<path d="M38 785v-7M41 784v-8M44 784v-8M47 785v-6M38 783c-2-2-3 0-1 3 2 5 4 9 7 9s5-3 5-7v-8" fill="#eee" stroke="#444"/>
<use href="#dn" x="57" y="786" fill="#888"/>
<text x="67" y="790" style="font-weight:bold;fill:#111;font-size:11px">PAN</text>

<!-- status bar -->
<rect x="9" y="798" width="1586" height="26" fill="url(#gs)"/>
<text x="19" y="816" style="font-family:'Liberation Mono',monospace;font-size:13px;fill:#222" textLength="150" lengthAdjust="spacingAndGlyphs">101.1106, 38.1280, 0.0000</text>
<rect x="219.500" y="800.500" width="22" height="21" class="st"/><rect x="241.500" y="800.500" width="22" height="21" class="st"/><rect x="263.500" y="800.500" width="22" height="21" class="st"/><rect x="285.500" y="800.500" width="22" height="21" class="st"/><rect x="307.500" y="800.500" width="22" height="21" class="st"/>
<rect x="329.500" y="800.500" width="22" height="21" class="sa"/><rect x="351.500" y="800.500" width="22" height="21" class="sa"/><rect x="373.500" y="800.500" width="22" height="21" class="sa"/><rect x="395.500" y="800.500" width="22" height="21" class="sa"/><rect x="417.500" y="800.500" width="22" height="21" class="sa"/>
<rect x="439.500" y="800.500" width="22" height="21" class="st"/><rect x="461.500" y="800.500" width="22" height="21" class="sa"/><rect x="483.500" y="800.500" width="22" height="21" class="st"/><rect x="505.500" y="800.500" width="22" height="21" class="st"/><rect x="527.500" y="800.500" width="22" height="21" class="st"/>
<path d="M230 804v12M224 810h12" stroke="#222"/><rect x="232" y="812" width="4" height="5" fill="#fff" stroke="#a33"/>
<path d="M246 805h12M246 808h12M246 811h12M246 814h12M246 817h12" stroke="#333" stroke-dasharray="1 2"/>
<path d="M268 804h14v14h-14zM268 807.500h14M268 811h14M268 814.500h14M271.500 804v14M275 804v14M278.500 804v14" fill="#ddd" stroke="#333" stroke-width=".8"/>
<path d="M289 803v16h16" fill="none" stroke="#333"/>
<circle cx="318" cy="811" r="5.500" fill="none" stroke="#333"/><path d="M318 811l5-6" stroke="#333"/>
<rect x="335" y="805" width="11" height="13" fill="#fff" stroke="#555"/><circle cx="334" cy="804" r="2" fill="#fff" stroke="#c33"/>
<path d="M357 805h12v10l-4 3h-8z" fill="#ddd" stroke="#666"/><circle cx="357" cy="818" r="2" fill="#fff" stroke="#c33"/>
<path d="M380 817l8-11M380 817h10" fill="none" stroke="#222"/>
<path d="M400 818l5-13 6 8M400 818h12" fill="none" stroke="#222"/><path d="M411 803l-2 4h2l-2 3" stroke="#e6a010" fill="none"/>
<path d="M423 811h12M426 806v5M427 815h8v-4" fill="none" stroke="#222" stroke-width="1.200"/>
<path d="M451 804v14M444 811h14" stroke="#111" stroke-width="1.600"/>
<rect x="465" y="804" width="15" height="15" fill="#7fa6d8" stroke="#225"/>
<rect x="490" y="805" width="9" height="12" fill="#eee" stroke="#222"/><path d="M492 807h5M492 810h5M492 813h5" stroke="#222"/>
<path d="M510 804h4M512 802v4M512 806v7h4" stroke="#222" fill="none"/><rect x="516" y="812" width="7" height="8" fill="#6bb04a" stroke="#222"/>
<path d="M535 804h6v5h5v6h-5v5h-6v-5h-5v-6h5z" fill="#ddd" stroke="#444"/>
<rect x="1230.500" y="799.500" width="29" height="21" class="st"/><rect x="1259.500" y="799.500" width="22" height="21" class="st"/><rect x="1281.500" y="799.500" width="22" height="21" class="st"/>
<rect x="1321.500" y="799.500" width="54" height="21" class="st"/><rect x="1375.500" y="799.500" width="22" height="21" class="st"/><rect x="1397.500" y="799.500" width="21" height="21" class="st"/>
<rect x="1426.500" y="799.500" width="22" height="21" class="st"/><rect x="1448.500" y="799.500" width="21" height="21" class="st"/><rect x="1469.500" y="799.500" width="22" height="21" class="st"/>
<rect x="1497.500" y="799.500" width="22" height="21" class="st"/><rect x="1519.500" y="799.500" width="21" height="21" class="st"/>
<rect x="1559.500" y="799.500" width="21" height="21" class="st"/>
<text x="1245" y="815" class="m" style="font-size:14px;fill:#111">模型</text>
<rect x="1265" y="802" width="11" height="13" fill="#eee" stroke="#333"/><path d="M1263 817h15" stroke="#333" stroke-width="2"/>
<rect x="1285" y="802" width="7" height="10" fill="#eee" stroke="#333"/><rect x="1293" y="802" width="7" height="10" fill="#eee" stroke="#333"/><path d="M1285 815h15" stroke="#333" stroke-width="2"/>
<path d="M1325 818l7-15 7 15-7-4z" fill="#ddd" stroke="#222"/>
<text x="1352" y="815" class="m" style="font-size:13px;fill:#111">1:1</text><path d="M1363 806h8l-4 5z" fill="#111"/>
<path d="M1380 818l6-14 6 14-6-4z" fill="#ddd" stroke="#222"/><circle cx="1392" cy="810" r="2" fill="#e6a010"/>
<path d="M1402 818l6-14 6 14-6-4z" fill="none" stroke="#666"/>
<circle cx="1436" cy="810" r="6" fill="#ddd" stroke="#222" stroke-width="2" stroke-dasharray="2.500 1"/><circle cx="1436" cy="810" r="2.500" fill="#999"/>
<rect x="1453" y="810" width="9" height="8" fill="#ccc" stroke="#222"/><path d="M1459 810v-4q0-3 3-3t3 3" fill="none" stroke="#ddd" stroke-width="1.500"/>
<ellipse cx="1480" cy="809" rx="5" ry="6" fill="#8a8a8a" stroke="#666"/>
<rect x="1502" y="803" width="11" height="13" fill="#3a70b0" stroke="#222"/><path d="M1506 817l3 3 6-7" fill="none" stroke="#6bc04a" stroke-width="2"/>
<path d="M1525 806a4.500 4.500 0 0 1 9 0c0 3-2 5-2.500 9h-4c-.5-4-2.500-6-2.500-9z" fill="#f0d880" stroke="#888"/>
<path d="M1548 807h7l-3.500 5z" fill="#111"/>
<rect x="1563" y="802" width="14" height="16" fill="#eee" stroke="#333"/><rect x="1563" y="802" width="14" height="3" fill="#555"/>
<path d="M1588 820h2M1591 820h2M1591 817h2M1594 820h2" stroke="#ccc"/>

<!-- taskbar -->
<rect x="0" y="824" width="1600" height="76" fill="#d4d0c8"/>
<rect x="0" y="824" width="1600" height="1" fill="#f4f4f0"/>
<rect x="101" y="830" width="1" height="65" fill="#888"/><rect x="102" y="830" width="1" height="65" fill="#fff"/>
<rect x="1374" y="830" width="1" height="65" fill="#888"/><rect x="1375" y="830" width="1" height="65" fill="#fff"/>
<rect x="1405.500" y="828.500" width="191" height="69" fill="none" stroke="#888"/>
<text x="1550" y="848" class="m" style="fill:#222">14:25</text>
<text x="1550" y="868" class="m" style="fill:#222;font-size:13px">星期二</text>
<text x="1550" y="887" class="m" style="fill:#222">2016/3/29</text>
</svg>

<div class="b" style="left:2px;top:828px;width:25px;height:19px;padding-left:18px">开始</div>
<div class="b" style="left:111px;top:828px;width:130px">计算器</div>
<div class="b n" style="left:268px;top:828px;width:132px">Total Commander 7.0 p...</div>
<div class="b" style="left:425px;top:828px;width:132px">工程系统&nbsp;&nbsp;版本：1.1....</div>
<div class="b" style="left:582px;top:828px;width:133px">兴森快捷衡阳分公司...</div>
<div class="b n" style="left:739px;top:828px;width:132px">制作规范 (Ver:1.0.6)</div>
<div class="b n" style="left:896px;top:828px;width:133px">get.exe</div>
<div class="b n" style="left:1053px;top:828px;width:132px">Engineering Toolkit 9.07...</div>
<div class="b n" style="left:1209px;top:828px;width:131px">Progress</div>
<div class="b n" style="left:111px;top:852px;width:130px">Graphic Editor 9.07b2 (...</div>
<div class="b n" style="left:268px;top:852px;width:133px">4B4761CYA0制作单.xls...</div>
<div class="b n" style="left:424px;top:852px;width:132px">4B4761CYA0-预审指示...</div>
<div class="b" style="left:581px;top:852px;width:132px">军品顾客特殊要求201...</div>
<div class="b n" style="left:737px;top:852px;width:133px">CAM_Guide v2.32</div>
<div class="b" style="left:894px;top:852px;width:133px">P3值班</div>
<div class="b n" style="left:1051px;top:852px;width:132px">4b4761cya0.txt - 写字板</div>
<div class="b n" style="left:1208px;top:852px;width:132px;background:#fbfbf8;border-color:#404040 #fff #fff #404040;font-weight:bold;color:#000">Autodesk AutoCAD 2...</div>

<svg width="1600" height="900" viewBox="0 0 1600 900" style="pointer-events:none">
<path d="M5 832l6-2v7l-6 1zM12 830l6 1v7l-6-1zM5 839l6-1v7l-6-1zM12 838l6 1v7l-6-2z" fill="#e06a1a"/><path d="M12 830l6 1v7l-6-1z" fill="#5aa83a"/><path d="M5 839l6-1v7l-6-1z" fill="#2a78c8"/><path d="M12 838l6 1v7l-6-2z" fill="#e8c020"/>
<circle cx="67" cy="857" r="4" fill="#5a9ad8"/><circle cx="75" cy="857" r="4" fill="#6bb04a"/><circle cx="67" cy="866" r="4" fill="#e08a30"/><circle cx="75" cy="866" r="4" fill="#d85050"/>
<rect x="116" y="831" width="12" height="15" fill="#d8e4f0" stroke="#6a8aaa"/><rect x="118" y="833" width="8" height="3" fill="#9ac"/>
<rect x="272" y="830" width="15" height="15" fill="#243a90"/><rect x="275" y="830" width="9" height="5" fill="#fff"/><rect x="274" y="838" width="11" height="7" fill="#d83030"/>
<path d="M434 831h10l-3 9h-4l-2 6h-4z" fill="#2a9a5a"/>
<path d="M594 830l3 5 5 1-4 4 1 6-5-3-5 3 1-6-4-4 5-1z" fill="#e08a20"/><circle cx="594" cy="838" r="2" fill="#c03020"/>
<rect x="745" y="831" width="11" height="15" fill="#dbe8f6" stroke="#4a8ac8"/><path d="M747 834h7M747 837h7M747 840h7M747 843h7" stroke="#2a7ac0"/>
<circle cx="907" cy="838" r="7" fill="#3a8a8a" stroke="#223"/><circle cx="907" cy="838" r="3" fill="#9ad"/>
<g fill="#fff" stroke="#444"><rect x="1058" y="830" width="15" height="16"/><rect x="1215" y="830" width="15" height="16"/><rect x="116" y="854" width="15" height="16"/></g>
<g fill="#1a1a70"><rect x="1058" y="830" width="15" height="3"/><rect x="1215" y="830" width="15" height="3"/><rect x="116" y="854" width="15" height="3"/></g>
<path d="M1061 835l8 9M1069 835l-8 9M1218 835l8 9M1226 835l-8 9M119 859l8 9M127 859l-8 9" stroke="#8a8a10" stroke-width="2"/>
<rect x="273" y="853" width="13" height="17" fill="#fff" stroke="#5a7a9a"/><rect x="271" y="855" width="9" height="9" fill="#2a8a4a"/>
<rect x="430" y="853" width="13" height="17" fill="#fff" stroke="#5a7a9a"/><rect x="428" y="855" width="9" height="9" fill="#2a8a4a"/>
<rect x="586" y="853" width="13" height="17" fill="#fff" stroke="#5a7a9a"/><rect x="584" y="855" width="9" height="9" fill="#2a5ab0"/>
<ellipse cx="749" cy="862" rx="8" ry="6" fill="#2a8a8a" stroke="#223"/><circle cx="749" cy="862" r="2.500" fill="#cde"/>
<rect x="898" y="855" width="15" height="16" rx="2" fill="#1f6ab0"/><path d="M902 859h8M902 863h6M902 859v9" stroke="#fff" stroke-width="2"/>
<rect x="1056" y="854" width="13" height="17" fill="#e8eef6" stroke="#4a6a9a"/><path d="M1058 858h9M1058 861h9M1058 864h9" stroke="#5a7ab0"/>
<rect x="1211" y="853" width="17" height="18" fill="#f0c8c8"/><path d="M1219 854l-6 15h12z" fill="#c0201a"/>
<rect x="1385" y="834" width="15" height="11" fill="none" stroke="#8a8a8a"/><path d="M1388 837h9M1388 840h9" stroke="#8a8a8a" stroke-dasharray="1 1"/>
<rect x="1385" y="853" width="6" height="5" fill="none" stroke="#222"/><rect x="1387" y="851" width="6" height="5" fill="#d4d0c8" stroke="#222"/>
<path d="M1385 865h6l-3 4z" fill="#222"/>
<path d="M1410 838l3-3 3 3M1410 842l3-3 3 3" fill="none" stroke="#222"/>
<path d="M1429 833l13 14M1442 833l-13 14" stroke="#6a2a9a" stroke-width="2.500"/>
<rect x="1452" y="832" width="13" height="16" rx="3" fill="#1f7ac8"/><circle cx="1458" cy="840" r="3" fill="#fff"/><rect x="1460" y="845" width="8" height="5" fill="#2aa84a"/>
<ellipse cx="1483" cy="840" rx="6" ry="8" fill="#1a2a5a"/><path d="M1480 837l6 6-3 2v-10l3 2-6 6" fill="none" stroke="#fff"/>
<path d="M1500 834h12v8l-6 6-6-6z" fill="#4aa84a" stroke="#2a6a2a"/>
<rect x="1429" y="856" width="10" height="15" rx="2" fill="#fff" stroke="#555"/><path d="M1431 856v-3M1437 856v-3" stroke="#555" stroke-width="2"/>
<path d="M1456 856a7 7 0 1 0 6 12" fill="none" stroke="#d03020" stroke-width="3"/><rect x="1459" y="862" width="8" height="7" fill="#f0d080" stroke="#555"/>
<path d="M1476 871l7-14 7 14-7-4z" fill="#d83020"/><path d="M1483 857l7 14-4-2z" fill="#2a9a4a"/>
<path d="M1502 857h11l-2 4h-7l-2 6h4l-1 3h-6z" fill="#1f8ae0"/>
<rect x="1580" y="856" width="14" height="11" fill="#3a7ac8"/><rect x="1578" y="867" width="18" height="2" fill="#3a5a8a"/>
<rect x="1428" y="878" width="8" height="12" rx="1" fill="#fff" stroke="#555"/><rect x="1434" y="882" width="8" height="10" fill="#ddd" stroke="#555"/>
<path d="M1455 882h3l4-4v13l-4-4h-3z" fill="#ccc" stroke="#666"/><path d="M1464 880q3 4 0 9" fill="none" stroke="#888"/>
</svg>
</body></html>
